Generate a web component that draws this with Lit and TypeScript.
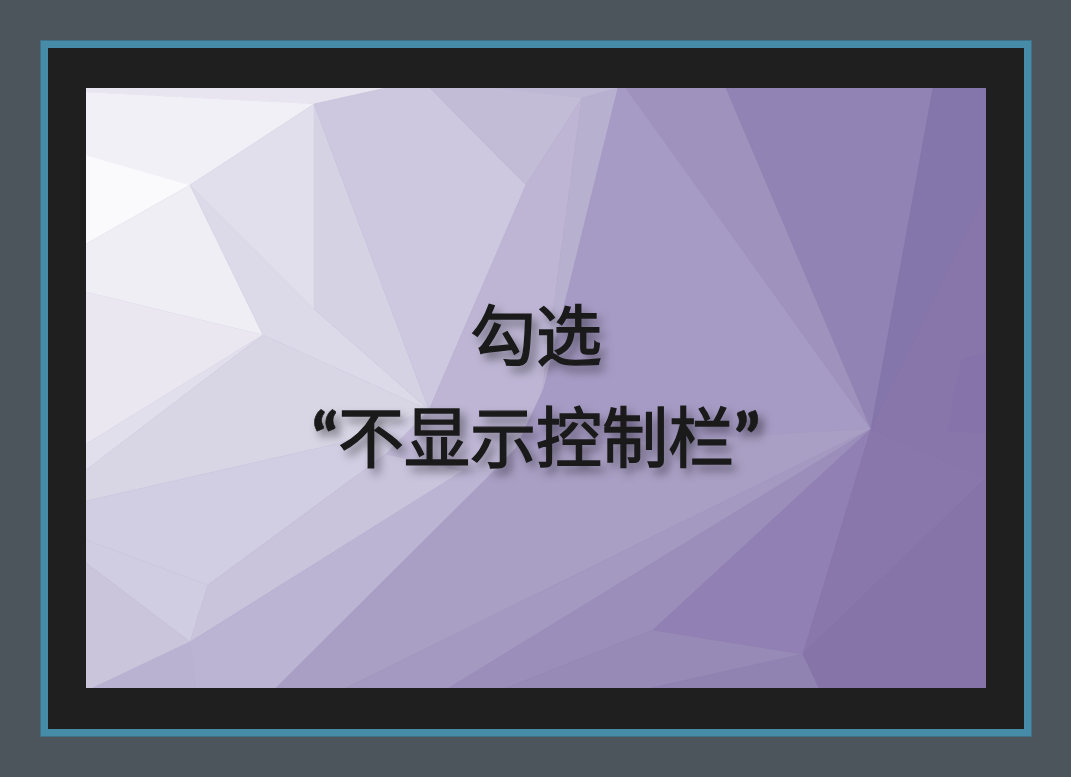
import { LitElement, html, css, svg } from "lit";
import { customElement } from "lit/decorators.js";

const polys: [string, string][] = [
  ["0,0 900,0 900,600 0,600", "#8875aa"],
  // top-left light zone
  ["0,0 300,0 228,16 0,4", "#e8e5f0"],
  ["0,4 228,16 104,97 0,67", "#f1f0f6"],
  ["0,67 104,97 0,156", "#fafafc"],
  ["0,156 104,97 177,247 0,204", "#efeef4"],
  ["0,204 177,247 0,356", "#eae7f1"],
  ["0,356 177,247 0,382", "#e2dfec"],
  ["228,16 104,97 228,221", "#e2dfec"],
  ["104,97 177,247 343,322 228,221", "#dcd9e8"],
  ["0,382 177,247 343,322 420,360 250,356 0,413", "#d8d5e5"],
  ["228,16 228,221 343,322", "#d5d2e4"],
  ["228,16 300,0 344,0 440,97 343,322", "#cdc8df"],
  ["344,0 532,0 496,10 440,97", "#c3bcd7"],
  ["410,0 532,0 496,10", "#bfb8d5"],
  // band right of the middle fold
  ["440,97 496,10 456,305 420,400 343,322", "#bdb5d3"],
  ["496,10 532,0 458,300 456,305", "#b8b0cf"],
  // top-right fan
  ["532,0 540,0 785,341 430,360 458,300", "#a69bc4"],
  ["540,0 640,0 785,341", "#9f93be"],
  ["640,0 847,0 785,341", "#9184b4"],
  ["847,0 900,0 900,103 785,341", "#8476aa"],
  ["875,272 900,265 900,345 862,343", "#8673a9"],
  // left lower
  ["0,413 250,356 343,322 300,366 122,497 0,452", "#d1cde2"],
  ["0,452 122,497 104,554 0,475", "#d0cce1"],
  ["0,475 104,554 7,600 0,600", "#cbc5dc"],
  ["122,497 300,366 377,383 104,554", "#c9c3dc"],
  ["104,554 377,383 409,382 190,600 7,600", "#bcb4d3"],
  ["104,554 7,600 110,600", "#bab2d1"],
  ["300,366 343,322 430,360 409,382 377,383", "#c0b8d6"],
  // centre lower fan
  ["409,382 430,360 785,341 260,600 190,600", "#a99fc4"],
  ["260,600 785,341 363,600", "#a499c0"],
  ["363,600 785,341 567,542 420,600", "#9b8eba"],
  ["420,600 567,542 717,566 565,600", "#978ab6"],
  ["565,600 717,566 733,600", "#9083b2"],
  ["567,542 785,341 717,566", "#9180b3"],
  ["785,341 900,390 717,566", "#8976aa"],
  ["717,566 900,390 900,600 733,600", "#8674a9"],
];

@customElement("app-root")
export class AppRoot extends LitElement {
  static styles = css`
    :host {
      display: block;
      width: 1071px;
      height: 777px;
      box-sizing: border-box;
      padding: 40px 39px 40px 40px;
      background: #4d555c;
    }
    .frame {
      height: 697px;
      box-sizing: border-box;
      border: 1px solid #3f7289;
    }
    .mat {
      height: 100%;
      box-sizing: border-box;
      border: 7px solid #468ba8;
      background: #1f1f1f;
      padding: 40px 38px 41px;
    }
    .picture {
      display: grid;
      width: 900px;
      height: 600px;
    }
    .picture > * {
      grid-area: 1 / 1;
    }
    .bg {
      display: block;
      width: 900px;
      height: 600px;
    }
    .caption {
      align-self: start;
      padding-top: 192px;
      text-align: center;
      font-family: "Noto Sans CJK SC", sans-serif;
      font-size: 66px;
      line-height: 102px;
      font-weight: 400;
      color: #1a1a1a;
      -webkit-text-stroke: 1.4px #1a1a1a;
      text-shadow: 5px 6px 10px rgba(0, 0, 0, 0.5);
    }
    .quote {
      font-family: "Lato", sans-serif;
      font-weight: 900;
      -webkit-text-stroke: 0.6px #1a1a1a;
    }
  `;

  render() {
    return html`
      <div class="frame">
        <div class="mat">
          <div class="picture">
            <svg class="bg" viewBox="0 0 900 600" aria-hidden="true">
              ${polys.map(([p, f]) => svg`<polygon points=${p} fill=${f} stroke=${f} stroke-width="0.6"></polygon>`)}
            </svg>
            <div class="caption">勾选<br /><span class="quote">“</span>不显示控制栏<span class="quote">”</span></div>
          </div>
        </div>
      </div>
    `;
  }
}
